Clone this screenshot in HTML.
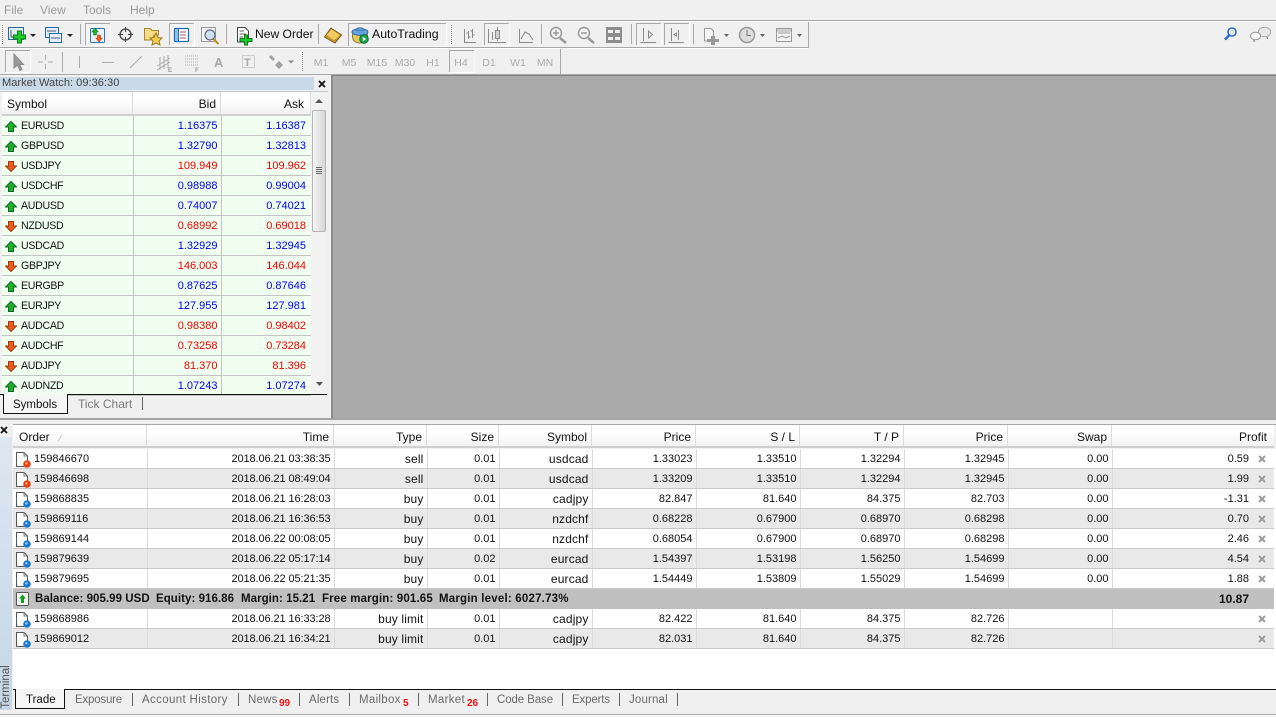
<!DOCTYPE html>
<html><head><meta charset="utf-8"><title>Terminal</title>
<style>
html,body{margin:0;padding:0;width:1276px;height:717px;overflow:hidden;background:#f0f0f0;font:11.5px "Liberation Sans",sans-serif;color:#111}
.a{position:absolute}
svg{position:absolute;overflow:visible}
svg text{font-family:"Liberation Sans",sans-serif}
#mw{left:2px;top:116px;border-collapse:collapse;table-layout:fixed;width:309px;font-size:11px}
#mw td{height:17px;padding:2px 3px 0 0;border-bottom:1px solid #c4c4c4;border-right:1px solid #c4c4c4;background:#f0fff0;text-align:right;line-height:17px;overflow:hidden}
#mw td:last-child{padding-right:5px;border-right:0}
#mw td:first-child{text-align:left;padding-left:19px;color:#111;font-size:10.6px;letter-spacing:-.3px}
.b td{color:#0000f0}.r td{color:#f00000}
#tt{left:13px;top:449px;border-collapse:collapse;table-layout:fixed;width:1261px;font-size:11px}
#tt td{height:17px;padding:2px 3px 0 0;border-bottom:1px solid #c8c8c8;border-right:1px solid #dcdcdc;text-align:right;line-height:17px;background:#fff;white-space:nowrap;overflow:hidden}
#tt td:first-child{text-align:left;padding-left:21px;padding-right:0}
#tt td:nth-child(2){letter-spacing:-.1px}
#tt td:nth-child(3),#tt td:nth-child(5){font-size:12px;letter-spacing:.15px}
#tt td:last-child{padding-right:25px;border-right:0}
#tt tr.g td{background:#e9e9e9}
#tt tr.s td{background:#c0c0c0;border:0;border-bottom:1px solid #c0c0c0}
.hd{position:absolute;height:23px;line-height:25px;font-size:12px;background:linear-gradient(#fff,#fff 35%,#f1f1f1);border-right:1px solid #dcdcdc;border-bottom:2px solid #cfcfcf;text-align:right;box-sizing:border-box;padding-right:4px}
.tab{position:absolute;top:693px;color:#6a6a6a;line-height:14px}
.sep{position:absolute;width:1px;background:#666}
.n{position:absolute;color:#f01010;font-size:10px;font-weight:bold;line-height:10px;top:699px}
.q{position:absolute;left:15px;width:16px;height:16px}
.bal{position:absolute;top:592px;font-weight:bold;line-height:14px;white-space:nowrap;letter-spacing:.05px}
</style></head><body>

<svg width="0" height="0" style="position:absolute"><defs>
<symbol id="up" viewBox="0 0 12 11"><polygon points="6,.5 11.5,6 8.5,6 8.5,10.5 3.5,10.5 3.5,6 .5,6" fill="#22b022" stroke="#0c6a2a"/></symbol>
<symbol id="dn" viewBox="0 0 12 11"><polygon points="6,10.5 11.5,5 8.500,5 8.500,.5 3.500,.5 3.500,5 .5,5" fill="#f05a1a" stroke="#9a3a10"/></symbol>
<symbol id="dr" viewBox="0 0 16 16"><path d="M1.500 .5H9L12.500 4V14.500H1.500Z" fill="#fff" stroke="#555"/><path d="M9 .5V4H12.500" fill="none" stroke="#777"/><circle cx="12" cy="12" r="3.800" fill="#e8400f"/><circle cx="11.400" cy="11.300" r="1.300" fill="#ff9a70"/></symbol>
<symbol id="db" viewBox="0 0 16 16"><path d="M1.500 .5H9L12.500 4V14.500H1.500Z" fill="#fff" stroke="#555"/><path d="M9 .5V4H12.500" fill="none" stroke="#777"/><circle cx="12" cy="12" r="3.800" fill="#1a78d0"/><circle cx="11.400" cy="11.300" r="1.300" fill="#8cc4f4"/></symbol>
</defs></svg>

<!-- menu -->
<div class="a" style="left:4px;top:3px;color:#9a9a9a;font-size:12px;line-height:14px">File</div>
<div class="a" style="left:40px;top:3px;color:#9a9a9a;font-size:12px;line-height:14px">View</div>
<div class="a" style="left:83px;top:3px;color:#9a9a9a;font-size:12px;line-height:14px">Tools</div>
<div class="a" style="left:130px;top:3px;color:#9a9a9a;font-size:12px;line-height:14px">Help</div>
<div class="a" style="left:0;top:20px;width:1276px;height:1px;background:#a8a8a8"></div>
<div class="a" style="left:0;top:21px;width:1276px;height:1px;background:#fff"></div>

<!-- toolbars -->
<svg style="left:0;top:0" width="1276" height="75" font-size="12">
<g fill="none" stroke="#a8a8a8">
<path d="M0 47.500H808.500V22" />
<path d="M80.500 24V44M226.500 24V44M318.500 24V44M541.500 24V44M631.500 24V44M693.500 24V44M62.500 52V72M560.500 49V74" stroke-width="1"/>
<path d="M2.500 25V44M451.500 25V44M302.500 52V71" stroke-dasharray="1 1" stroke="#888"/>
</g>
<path d="M0 48.500H808" stroke="#fff"/>
<!-- pressed boxes -->
<g fill="#f5f5f5" stroke="#a8a8a8">
<path d="M85.500 45V23.500H110" fill="#f4f4f4"/><path d="M169.500 45V23.500H194" fill="#f4f4f4"/>
<path d="M484.500 45V23.500H509" fill="none"/><path d="M636.500 45V23.500H661" fill="none"/><path d="M664.500 45V23.500H689" fill="none"/>
<path d="M348.500 46V23.500H446" fill="none"/><path d="M5.500 72V50.500H30" fill="none"/><path d="M449.500 72V50.500H474" fill="none"/>
</g>
<g fill="none" stroke="#fff">
<path d="M86 45.500H110.500V23"/><path d="M170 45.500H194.500V23"/><path d="M485 45.500H509.500V23"/><path d="M637 45.500H661.500V23"/><path d="M665 45.500H689.500V23"/><path d="M349 46.500H446.500V23"/><path d="M6 72.500H30.500V50"/><path d="M450 72.500H474.500V50"/>
</g>
<!-- new chart -->
<rect x="8.500" y="27.500" width="15" height="12" fill="#e4eef8" stroke="#2468a8"/>
<path d="M11 30V37H19" stroke="#456" fill="none"/>
<path d="M17.500 31h4v4h4v4h-4v4h-4v-4h-4v-4h4z" fill="#1ecb2a" stroke="#0b7d18"/>
<path d="M30 34h6l-3 3z" fill="#222"/>
<!-- profiles -->
<rect x="45.500" y="27.500" width="13" height="10" fill="#e4eef8" stroke="#2468a8"/>
<rect x="49.500" y="33.500" width="12" height="9" fill="#e4eef8" stroke="#2468a8"/>
<path d="M47 31H56M51 38H60" stroke="#557" fill="none"/>
<path d="M67 34h6l-3 3z" fill="#222"/>
<!-- market watch icon -->
<rect x="90.500" y="28.500" width="14" height="14" rx="1" fill="#eaf2fb" stroke="#2a74b8"/>
<path d="M95 28l3.500 4h-2v3h-3v-3h-2z" fill="#22b022" stroke="#0c6a2a" stroke-width=".5"/>
<path d="M99 42l3.500-4h-2v-3h-3v3h-2z" fill="#f05a1a" stroke="#9a3a10" stroke-width=".5"/>
<!-- crosshair -->
<circle cx="125.500" cy="34.500" r="5.500" fill="#f0f0f0" stroke="#444" stroke-width="1.300"/>
<path d="M125.500 27V32M125.500 37V42M118 34.500H123M128 34.500H133" stroke="#444"/>
<!-- folder star -->
<path d="M144.500 40V28.500H150L152 30.500H158.500V35H154L152 40Z" fill="#f6dc84" stroke="#a8842c"/>
<polygon points="156,33 158,37.500 162,38 159,41 160,45 156,43 152,45 153,41 150,38 154,37.500" fill="#f2d050" stroke="#9c7c20"/>
<!-- navigator icon -->
<rect x="174.500" y="28.500" width="14" height="13" rx="1" fill="#fff" stroke="#1c70b8" stroke-width="1.300"/>
<rect x="174.500" y="28.500" width="4" height="13" fill="#8cc0ee" stroke="#1c70b8"/>
<path d="M180 32H186M180 35H186M180 38H186" stroke="#a05060"/>
<!-- tester -->
<rect x="201.500" y="27.500" width="14" height="14" fill="#f4f4f4" stroke="#999"/>
<circle cx="210" cy="35" r="5" fill="#cfe0f0" stroke="#557"/>
<path d="M213.500 39L218.500 44" stroke="#c09020" stroke-width="2"/>
<!-- new order -->
<path d="M237.500 27.500H245L248.500 31V42H237.500Z" fill="#fff" stroke="#444"/>
<path d="M239.500 31H244M239.500 34H246M239.500 37H243" stroke="#666"/>
<path d="M244.500 35h3v3.500h4.500v3h-4.500v3.500h-3v-3.500h-4.500v-3h4.500z" fill="#1ecb2a" stroke="#0b7d18"/>
<text x="255" y="38" fill="#111" font-size="12.100">New Order</text>
<!-- gold -->
<path d="M324.500 37L331 28L341.500 35L335 43Z" fill="#c89830" stroke="#7a5a18"/>
<path d="M326.500 35L331.500 29.500L340 35L334 40Z" fill="#f2cc60"/>
<!-- autotrading -->
<path d="M352.500 33C352 40 354 43 360 43C366 43 368 40 367.500 33Z" fill="#e4c85a" stroke="#8a7a30"/>
<ellipse cx="360" cy="32" rx="8" ry="3.500" fill="#62a0dc" stroke="#3a70a8"/>
<path d="M356 30C357 27 363 27 364 30Z" fill="#7ab4e8" stroke="#3a70a8"/>
<circle cx="364" cy="39" r="4.300" fill="#18a84a" stroke="#0b7030"/>
<path d="M362.800 36.800L366.200 39L362.800 41.200Z" fill="#fff"/>
<text x="372" y="38" fill="#111" font-size="12.300">AutoTrading</text>
<!-- chart icons -->
<g fill="none" stroke="#8a8a8a">
<path d="M464.500 29V42.500H476"/><path d="M468.500 31V39M466.500 33H468.500M468.500 37H470.500M472.500 29V38M470.500 31H472.500M472.500 35H474.500"/>
<path d="M488.500 29V42.500H506"/><rect x="495.500" y="30.500" width="4" height="8" fill="#d0d0d0"/><path d="M497.500 27V30M497.500 39V41M492.500 32V40"/>
<path d="M519.500 29V42.500H533M521 39L525 32L529 34L533 40"/>
<path d="M640.500 42.500H656M643.500 28V41"/><path d="M648.500 31L652.500 34.500L648.500 38Z"/>
<path d="M668.500 42.500H684M671.500 28V41"/><path d="M678.500 30V40M676.500 33L674 34.500L676.500 36Z"/>
</g>
<!-- zoom -->
<circle cx="556" cy="33" r="5.500" fill="#f4f4f4" stroke="#999" stroke-width="1.500"/><path d="M553 33H559M556 30V36" stroke="#999" stroke-width="1.500"/><path d="M560 38L566 43" stroke="#999" stroke-width="2.500"/>
<circle cx="584" cy="33" r="5.500" fill="#f4f4f4" stroke="#999" stroke-width="1.500"/><path d="M581 33H587" stroke="#999" stroke-width="1.500"/><path d="M588 38L594 43" stroke="#999" stroke-width="2.500"/>
<!-- tile -->
<rect x="606" y="27" width="16" height="16" fill="#8c8c8c"/><path d="M608 30h5v3h-5zM615 30h5v3h-5zM608 37h5v3h-5zM615 37h5v3h-5z" fill="#eee"/>
<!-- indicators -->
<path d="M704.500 28.500H711L713.500 31V41H704.500Z" fill="#f4f4f4" stroke="#999"/><path d="M711 36h4v3h4v3h-4v3h-4v-3h-4v-3h4z" fill="#999"/>
<path d="M724 34h5l-2.500 3z" fill="#666"/>
<!-- clock -->
<circle cx="747" cy="35" r="7.500" fill="#ddd" stroke="#999" stroke-width="1.500"/><path d="M747 30V35.500H751" stroke="#777" fill="none"/>
<path d="M760 34h5l-2.500 3z" fill="#666"/>
<!-- template -->
<rect x="776.500" y="28.500" width="15" height="13" fill="#f4f4f4" stroke="#999"/><path d="M778 33H790M778 38L782 36L786 38L790 36" stroke="#999" fill="none"/><rect x="777" y="29" width="14" height="3" fill="#ccc"/>
<path d="M797 34h5l-2.500 3z" fill="#666"/>
<!-- search / chat -->
<circle cx="1232" cy="32" r="4" fill="none" stroke="#2a6cd0" stroke-width="1.600"/><path d="M1229 35.500L1225 39.500" stroke="#2a6cd0" stroke-width="2.600"/>
<ellipse cx="1264.500" cy="32" rx="6.200" ry="4.800" fill="#e8e8e8" stroke="#aaa"/><path d="M1267 37L1267.500 39" stroke="#666"/>
<ellipse cx="1255.500" cy="36" rx="5" ry="3.800" fill="#f6f6f6" stroke="#999"/><path d="M1254 40V42" stroke="#666"/>
<!-- toolbar2 -->
<path d="M14 54V68L17.500 65L20 70.500L22 69.500L19.500 64.500H23.500Z" fill="#9a9a9a" stroke="#888"/>
<g stroke="#aaa" fill="none">
<path d="M45.500 55V60M45.500 64V69M38 62H43M48 62H53"/>
<path d="M79.500 56V68M102 62.500H114M130 68L142 56"/>
<path d="M157 66L170 58M157 70L170 62M160 57V70M164 56V69M168 55V68"/>
<path d="M185 56H198M185 59H198M185 62H198M185 65H198" stroke-dasharray="1 1"/>
<rect x="242.500" y="55.500" width="12" height="12" stroke-dasharray="1 1"/>
</g>
<text x="168" y="72" font-size="6" font-weight="bold" fill="#999">E</text>
<text x="195" y="72" font-size="6" font-weight="bold" fill="#999">F</text>
<text x="214" y="67" font-size="13" font-weight="bold" fill="#a8a8a8">A</text>
<text x="244" y="66" font-size="11" font-weight="bold" fill="#a8a8a8">T</text>
<path d="M271 55L275 59L273 61L269 57ZM279 61L283 65L279 69L275 65Z" fill="#a0a0a0"/>
<path d="M288 60.500h6l-3 3z" fill="#888"/>
<g font-size="10.500" fill="#ababab" text-anchor="middle">
<text x="321" y="66">M1</text><text x="349" y="66">M5</text><text x="377" y="66">M15</text><text x="405" y="66">M30</text><text x="433" y="66">H1</text><text x="461" y="66">H4</text><text x="489" y="66">D1</text><text x="518" y="66">W1</text><text x="545" y="66">MN</text>
</g>
</svg>

<!-- chart area -->
<div class="a" style="left:0;top:74px;width:1276px;height:1px;background:#a8a8a8"></div>
<div class="a" style="left:331px;top:75px;width:945px;height:343px;background:#ababab;border-left:2px solid #8c8c8c;border-top:1px solid #808080;box-sizing:border-box"></div>
<div class="a" style="left:0;top:418px;width:1276px;height:2px;background:#a4a4a4"></div>

<!-- market watch -->
<div class="a" style="left:0;top:77px;width:314px;height:13px;background:#c9d9e8;color:#444;font-size:11.100px;line-height:13px;padding-left:2px;box-sizing:border-box">Market Watch: 09:36:30</div>
<svg style="left:318px;top:80px" width="9" height="8"><path d="M1 1L7 7M7 1L1 7" stroke="#111" stroke-width="1.800"/></svg>
<div class="a" style="left:0;top:91px;width:328px;height:1px;background:#c8c8c8"></div>
<div class="hd" style="left:2px;top:92px;height:24px;width:131px;text-align:left;padding-left:5px">Symbol</div>
<div class="hd" style="left:133px;top:92px;height:24px;width:88px;padding-right:4px">Bid</div>
<div class="hd" style="left:221px;top:92px;height:24px;width:90px;padding-right:6px">Ask</div>
<table class="a" id="mw"><colgroup><col style="width:131px"><col style="width:88px"><col style="width:90px"></colgroup>
<tr class="b"><td>EURUSD</td><td>1.16375</td><td>1.16387</td></tr>
<tr class="b"><td>GBPUSD</td><td>1.32790</td><td>1.32813</td></tr>
<tr class="r"><td>USDJPY</td><td>109.949</td><td>109.962</td></tr>
<tr class="b"><td>USDCHF</td><td>0.98988</td><td>0.99004</td></tr>
<tr class="b"><td>AUDUSD</td><td>0.74007</td><td>0.74021</td></tr>
<tr class="r"><td>NZDUSD</td><td>0.68992</td><td>0.69018</td></tr>
<tr class="b"><td>USDCAD</td><td>1.32929</td><td>1.32945</td></tr>
<tr class="r"><td>GBPJPY</td><td>146.003</td><td>146.044</td></tr>
<tr class="b"><td>EURGBP</td><td>0.87625</td><td>0.87646</td></tr>
<tr class="b"><td>EURJPY</td><td>127.955</td><td>127.981</td></tr>
<tr class="r"><td>AUDCAD</td><td>0.98380</td><td>0.98402</td></tr>
<tr class="r"><td>AUDCHF</td><td>0.73258</td><td>0.73284</td></tr>
<tr class="r"><td>AUDJPY</td><td>81.370</td><td>81.396</td></tr>
<tr class="b"><td>AUDNZD</td><td>1.07243</td><td>1.07274</td></tr>
</table>
<svg style="left:5px;top:121px" width="12" height="270">
<use href="#up" y="0" width="12" height="11"/><use href="#up" y="20" width="12" height="11"/><use href="#dn" y="40" width="12" height="11"/><use href="#up" y="60" width="12" height="11"/><use href="#up" y="80" width="12" height="11"/><use href="#dn" y="100" width="12" height="11"/><use href="#up" y="120" width="12" height="11"/><use href="#dn" y="140" width="12" height="11"/><use href="#up" y="160" width="12" height="11"/><use href="#up" y="180" width="12" height="11"/><use href="#dn" y="200" width="12" height="11"/><use href="#dn" y="220" width="12" height="11"/><use href="#dn" y="240" width="12" height="11"/><use href="#up" y="260" width="12" height="11"/>
</svg>
<!-- scrollbar -->
<div class="a" style="left:311px;top:92px;width:16px;height:302px;background:#f2f2f2"></div>
<svg style="left:311px;top:92px" width="16" height="302"><path d="M4 11h8l-4-4z" fill="#555"/><path d="M5 290h7l-3.500 4z" fill="#555"/></svg>
<div class="a" style="left:312px;top:110px;width:14px;height:122px;background:linear-gradient(90deg,#f6f6f6,#d6d6d6);border:1px solid #b4b4b4;box-sizing:border-box;border-radius:2px"></div>
<div class="a" style="left:316px;top:167px;width:6px;height:7px;background:repeating-linear-gradient(#666 0 1px,#e8e8e8 1px 2px)"></div>

<div class="a" style="left:0;top:394px;width:327px;height:1px;background:#111"></div>
<div class="a" style="left:3px;top:394px;width:65px;height:20px;background:#f6f6f6;border:1px solid #111;border-top:0;box-sizing:border-box;line-height:22px;padding-left:9px;color:#111;font-size:11.500px">Symbols</div>
<div class="a" style="left:78px;top:397px;color:#7a7a7a;line-height:14px;font-size:12px">Tick Chart</div>
<div class="sep" style="left:142px;top:397px;height:13px"></div>

<!-- terminal -->
<svg style="left:0;top:426px" width="9" height="8"><path d="M1 1L7 7M7 1L1 7" stroke="#111" stroke-width="1.800"/></svg>
<div class="a" style="left:0;top:437px;width:12px;height:273px;background:linear-gradient(#dde7f1,#c5d6e6)"></div>
<div class="a" style="left:-19px;top:680px;width:50px;height:14px;line-height:14px;transform:rotate(-90deg);color:#555;text-align:center">Terminal</div>
<div class="a" style="left:13px;top:424px;width:1263px;height:1px;background:#a8a8a8"></div>
<div class="a" style="left:13px;top:449px;width:1263px;height:241px;background:#fff"></div>
<div class="hd" style="left:13px;top:425px;width:134px;text-align:left;padding-left:6px">Order &nbsp;&nbsp;<span style="color:#aaa;font-size:9px">&#8725;</span></div>
<div class="hd" style="left:147px;top:425px;width:187px">Time</div>
<div class="hd" style="left:334px;top:425px;width:93px">Type</div>
<div class="hd" style="left:427px;top:425px;width:72px">Size</div>
<div class="hd" style="left:499px;top:425px;width:93px">Symbol</div>
<div class="hd" style="left:592px;top:425px;width:104px">Price</div>
<div class="hd" style="left:696px;top:425px;width:104px">S / L</div>
<div class="hd" style="left:800px;top:425px;width:104px">T / P</div>
<div class="hd" style="left:904px;top:425px;width:104px">Price</div>
<div class="hd" style="left:1008px;top:425px;width:104px">Swap</div>
<div class="hd" style="left:1112px;top:425px;width:162px;padding-right:7px;border-right:0">Profit</div>

<table class="a" id="tt"><colgroup><col style="width:134px"><col style="width:187px"><col style="width:93px"><col style="width:72px"><col style="width:93px"><col style="width:104px"><col style="width:104px"><col style="width:104px"><col style="width:104px"><col style="width:104px"><col style="width:162px"></colgroup>
<tr><td>159846670</td><td>2018.06.21 03:38:35</td><td>sell</td><td>0.01</td><td>usdcad</td><td>1.33023</td><td>1.33510</td><td>1.32294</td><td>1.32945</td><td>0.00</td><td>0.59</td></tr>
<tr class="g"><td>159846698</td><td>2018.06.21 08:49:04</td><td>sell</td><td>0.01</td><td>usdcad</td><td>1.33209</td><td>1.33510</td><td>1.32294</td><td>1.32945</td><td>0.00</td><td>1.99</td></tr>
<tr><td>159868835</td><td>2018.06.21 16:28:03</td><td>buy</td><td>0.01</td><td>cadjpy</td><td>82.847</td><td>81.640</td><td>84.375</td><td>82.703</td><td>0.00</td><td>-1.31</td></tr>
<tr class="g"><td>159869116</td><td>2018.06.21 16:36:53</td><td>buy</td><td>0.01</td><td>nzdchf</td><td>0.68228</td><td>0.67900</td><td>0.68970</td><td>0.68298</td><td>0.00</td><td>0.70</td></tr>
<tr><td>159869144</td><td>2018.06.22 00:08:05</td><td>buy</td><td>0.01</td><td>nzdchf</td><td>0.68054</td><td>0.67900</td><td>0.68970</td><td>0.68298</td><td>0.00</td><td>2.46</td></tr>
<tr class="g"><td>159879639</td><td>2018.06.22 05:17:14</td><td>buy</td><td>0.02</td><td>eurcad</td><td>1.54397</td><td>1.53198</td><td>1.56250</td><td>1.54699</td><td>0.00</td><td>4.54</td></tr>
<tr><td>159879695</td><td>2018.06.22 05:21:35</td><td>buy</td><td>0.01</td><td>eurcad</td><td>1.54449</td><td>1.53809</td><td>1.55029</td><td>1.54699</td><td>0.00</td><td>1.88</td></tr>
<tr class="s"><td></td><td></td><td></td><td></td><td></td><td></td><td></td><td></td><td></td><td></td><td style="font-weight:bold;font-size:12px">10.87</td></tr>
<tr><td>159868986</td><td>2018.06.21 16:33:28</td><td>buy limit</td><td>0.01</td><td>cadjpy</td><td>82.422</td><td>81.640</td><td>84.375</td><td>82.726</td><td></td><td></td></tr>
<tr class="g"><td>159869012</td><td>2018.06.21 16:34:21</td><td>buy limit</td><td>0.01</td><td>cadjpy</td><td>82.031</td><td>81.640</td><td>84.375</td><td>82.726</td><td></td><td></td></tr>
</table>
<svg class="q" style="top:452px;height:196px" width="16" height="196">
<use href="#dr" y="0" width="16" height="16"/><use href="#dr" y="20" width="16" height="16"/><use href="#db" y="40" width="16" height="16"/><use href="#db" y="60" width="16" height="16"/><use href="#db" y="80" width="16" height="16"/><use href="#db" y="100" width="16" height="16"/><use href="#db" y="120" width="16" height="16"/>
<rect x="1.500" y="140.500" width="12" height="13" rx="1" fill="#f4f4f4" stroke="#555"/><path d="M7.500 142.500L11 146.500H9V151H6V146.500H4Z" fill="#12a020"/>
<use href="#db" y="160" width="16" height="16"/><use href="#db" y="180" width="16" height="16"/>
</svg>
<div class="bal" style="left:35px">Balance: 905.99 USD</div>
<div class="bal" style="left:156px">Equity: 916.86</div>
<div class="bal" style="left:241px">Margin: 15.21</div>
<div class="bal" style="left:322px;letter-spacing:.15px">Free margin: 901.65</div>
<div class="bal" style="left:439px;letter-spacing:.2px">Margin level: 6027.73%</div>

<svg style="left:1258px;top:455px" width="9" height="190"><g stroke="#9c9c9c" stroke-width="2"><path d="M1 1L7 7M7 1L1 7"/><path d="M1 21L7 27M7 21L1 27"/><path d="M1 41L7 47M7 41L1 47"/><path d="M1 61L7 67M7 61L1 67"/><path d="M1 81L7 87M7 81L1 87"/><path d="M1 101L7 107M7 101L1 107"/><path d="M1 121L7 127M7 121L1 127"/><path d="M1 161L7 167M7 161L1 167"/><path d="M1 181L7 187M7 181L1 187"/></g></svg>

<!-- terminal tabs -->
<div class="a" style="left:13px;top:689px;width:1263px;height:1px;background:#111"></div>
<div class="a" style="left:15px;top:689px;width:50px;height:20px;background:#f6f6f6;border:1px solid #111;border-top:0;box-sizing:border-box;line-height:22px;padding-left:10px;color:#111">Trade</div>
<div class="tab" style="left:75px;letter-spacing:-.2px">Exposure</div><div class="sep" style="left:132px;top:693px;height:13px"></div>
<div class="tab" style="left:142px;letter-spacing:.35px">Account History</div><div class="sep" style="left:238px;top:693px;height:13px"></div>
<div class="tab" style="left:248px;letter-spacing:.2px">News</div><div class="n" style="left:279px">99</div><div class="sep" style="left:299px;top:693px;height:13px"></div>
<div class="tab" style="left:309px;letter-spacing:.15px">Alerts</div><div class="sep" style="left:349px;top:693px;height:13px"></div>
<div class="tab" style="left:359px;letter-spacing:.3px">Mailbox</div><div class="n" style="left:403px">5</div><div class="sep" style="left:418px;top:693px;height:13px"></div>
<div class="tab" style="left:428px;letter-spacing:.3px">Market</div><div class="n" style="left:467px">26</div><div class="sep" style="left:487px;top:693px;height:13px"></div>
<div class="tab" style="left:497px;letter-spacing:-.1px">Code Base</div><div class="sep" style="left:562px;top:693px;height:13px"></div>
<div class="tab" style="left:572px;letter-spacing:-.15px">Experts</div><div class="sep" style="left:619px;top:693px;height:13px"></div>
<div class="tab" style="left:629px;letter-spacing:.15px">Journal</div><div class="sep" style="left:677px;top:693px;height:13px"></div>
<div class="a" style="left:0;top:714px;width:1276px;height:1px;background:#a8a8a8"></div>
<div class="a" style="left:0;top:715px;width:1276px;height:2px;background:#f8f8f8"></div>
</body></html>
